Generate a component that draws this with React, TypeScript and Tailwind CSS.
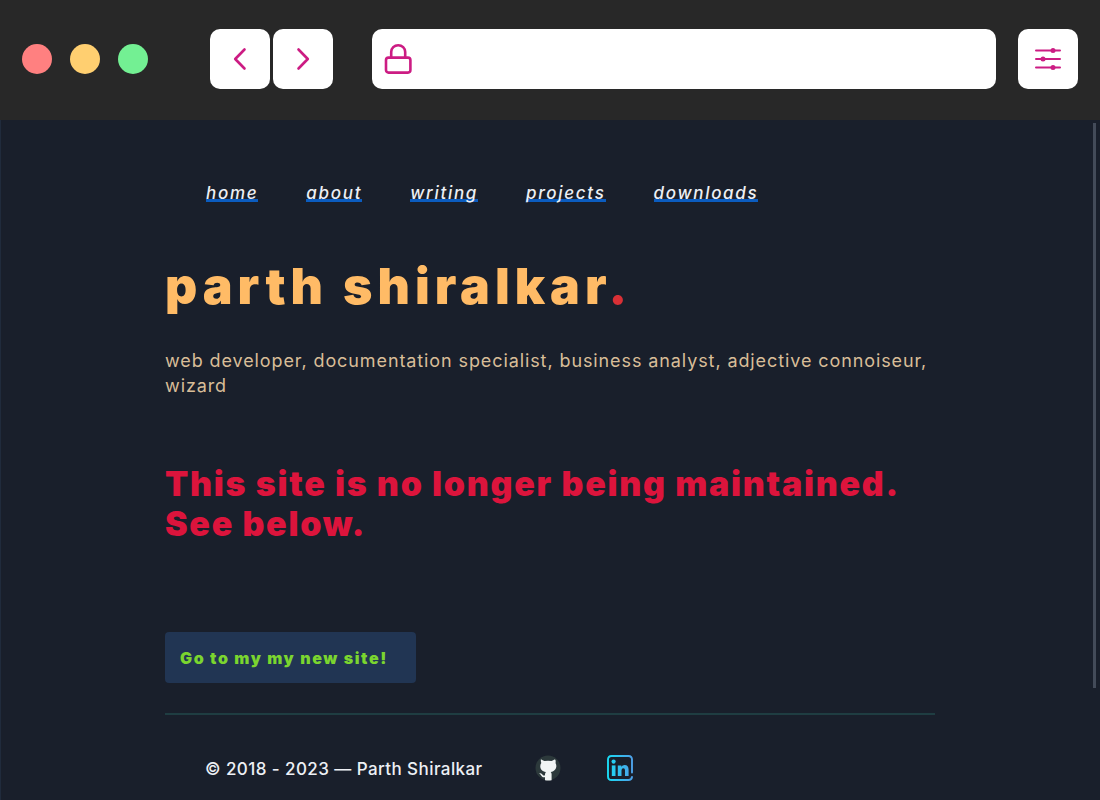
import React from "react";

const links = ["home", "about", "writing", "projects", "downloads"];

function Chevron({ d }: { d: string }) {
  return (
    <svg viewBox="0 0 60 60" className="size-full" fill="none" stroke="#cc1c83" strokeWidth="2.6" strokeLinecap="round" strokeLinejoin="round" aria-hidden="true">
      <path d={d} />
    </svg>
  );
}

function BrowserBar() {
  return (
    <header className="flex h-[120px] items-center bg-[#282828] px-[22px] pb-[2px]">
      <div className="flex shrink-0 gap-[18px]">
        <span className="size-[30px] rounded-full bg-[#ff8080]" />
        <span className="size-[30px] rounded-full bg-[#ffcf70]" />
        <span className="size-[30px] rounded-full bg-[#73f093]" />
      </div>
      <div className="ml-[62px] flex shrink-0 gap-[3px]">
        <button type="button" aria-label="Back" className="size-[60px] rounded-[10px] bg-white">
          <Chevron d="M34.5 20.500 L25.200 30 L34.500 39.500" />
        </button>
        <button type="button" aria-label="Forward" className="size-[60px] rounded-[10px] bg-white">
          <Chevron d="M25.5 20.500 L34.800 30 L25.500 39.500" />
        </button>
      </div>
      <label className="ml-[39px] flex h-[60px] min-w-0 flex-1 items-center rounded-[10px] bg-white pl-3">
        <svg viewBox="0 0 28 32" className="h-8 w-7 shrink-0" fill="none" stroke="#cc1c83" strokeWidth="2.6" strokeLinejoin="round" aria-hidden="true">
          <rect x="2" y="14.600" width="24.400" height="15" rx="2.500" />
          <path d="M7.200 14.400 V9 a7 6.800 0 0 1 14 0 V14.400" />
        </svg>
        <input type="text" aria-label="Address" className="h-full min-w-0 flex-1 bg-transparent px-3 font-['Inter',sans-serif] text-lg text-[#282828] outline-none" />
      </label>
      <button type="button" aria-label="Settings" className="ml-[22px] size-[60px] shrink-0 rounded-[10px] bg-white">
        <svg viewBox="0 0 60 60" className="size-full" fill="#cc1c83" stroke="#cc1c83" strokeWidth="2" strokeLinecap="round" aria-hidden="true">
          <path d="M18 21.500 H42 M18 30 H42 M18 38.500 H42" />
          <g stroke="none">
            <circle cx="35" cy="21.500" r="2.500" />
            <circle cx="25" cy="30" r="2.500" />
            <circle cx="35" cy="38.500" r="2.500" />
          </g>
        </svg>
      </button>
    </header>
  );
}

function GithubIcon() {
  return (
    <svg viewBox="0 0 26 26" className="size-[26px]" aria-hidden="true">
      <circle cx="13" cy="13" r="12.500" fill="#2c393b" />
      <path
        fill="#f1f5f5"
        d="M5.900 5.100 C5.500 4 6.300 4.200 9.500 6.100 Q13 5.500 16.500 6.100 C19.700 4.200 20.400 4 20.600 5.600 Q20.800 7 20.500 8 C22.500 11 21 16.400 15.700 16.900 Q16.700 17.900 16.600 19.600 V25.200 Q13.300 26 10 25.200 V22.200 C7.700 22.500 6.800 21.700 6 20.200 Q5.300 19 4.200 18.400 C5.900 17.700 6.900 18.700 7.600 19.700 Q8.500 21 10.100 20.300 Q9.700 18.300 10.900 16.900 C5.500 16.400 4 11 6.300 8 Q5.700 6.500 5.900 5.100 Z"
      />
    </svg>
  );
}

function LinkedinIcon() {
  return (
    <svg viewBox="0 0 26 26" className="size-[26px]" fill="none" stroke="url(#linkedin-blue)" strokeWidth="1.900" strokeLinecap="round" strokeLinejoin="round" aria-hidden="true">
      <defs>
        <linearGradient id="linkedin-blue" gradientUnits="userSpaceOnUse" x1="0" y1="0" x2="26" y2="0">
          <stop offset="0" stopColor="#18dcf4" />
          <stop offset="1" stopColor="#4f9fe8" />
        </linearGradient>
      </defs>
      <path d="M25 17.500 V4.500 Q25 1 21.500 1 H4.500 Q1 1 1 4.500 V21.500 Q1 25 4.500 25 H21.500 Q24.500 25 25 22" />
      <g fill="url(#linkedin-blue)" stroke="none">
        <circle cx="6.600" cy="6.600" r="2.100" />
        <path d="M4.800 10.400 H8.500 V21 H4.800 Z" />
        <path d="M10.800 10.400 H14.300 V11.800 Q15.400 10.100 17.700 10.100 Q21.600 10.100 21.600 14.800 V21 H18 V15.300 Q18 13.300 16.400 13.300 Q14.500 13.300 14.500 15.500 V21 H10.800 Z" />
      </g>
    </svg>
  );
}

export default function App() {
  return (
    <div className="flex min-h-screen flex-col bg-[#191f2b] font-['Inter',sans-serif]">
      <BrowserBar />
      <div className="relative flex-1 shadow-[inset_1px_0_#202b3c]">
        <div className="absolute right-[4px] top-[3px] h-[565px] w-[3px] bg-[#434b59]" />
        <div className="mx-auto w-[70%]">
          <nav className="pl-[41px] pt-[60px]">
            <ul className="flex flex-wrap gap-x-12 text-[17px] leading-[26px] font-medium tracking-widest text-[#edf0f5] italic">
              {links.map((link) => (
                <li key={link}>
                  <a href={`#${link}`} className="block h-[22px] border-b-[3px] border-[#0b5cbf]">
                    {link}
                  </a>
                </li>
              ))}
            </ul>
          </nav>
          <main>
            <h1 className="mt-[54px] text-[50px] leading-[60px] font-black tracking-widest text-[#ffbb66]">
              parth shiralkar<span className="text-[#d93036]">.</span>
            </h1>
            <p className="mt-8 text-lg leading-[25px] tracking-wider text-[#d8bd98]">
              web developer, documentation specialist, business analyst, adjective connoiseur, wizard
            </p>
            <h2 className="mt-[66px] text-[34px] leading-10 font-black tracking-wider text-[#dc143c]">
              This site is no longer being maintained. See below.
            </h2>
            <a
              href="#new-site"
              className="mt-[88px] inline-flex h-[51px] items-center rounded-[4px] bg-[#213553] pr-7 pl-[15px] text-base font-black tracking-widest text-[#7bd52f]"
            >
              Go to my my new site!
            </a>
          </main>
          <hr className="mt-[30px] border-t-2 border-[#1f3d42]" />
          <footer className="flex items-center pt-10 pl-10 text-[#edf0f5]">
            <p className="pt-[2px] text-[17px] leading-6 font-medium tracking-wide">© 2018 - 2023 — Parth Shiralkar</p>
            <a href="#github" aria-label="GitHub" className="ml-[52px]">
              <GithubIcon />
            </a>
            <a href="#linkedin" aria-label="LinkedIn" className="ml-[46px]">
              <LinkedinIcon />
            </a>
          </footer>
        </div>
      </div>
    </div>
  );
}
